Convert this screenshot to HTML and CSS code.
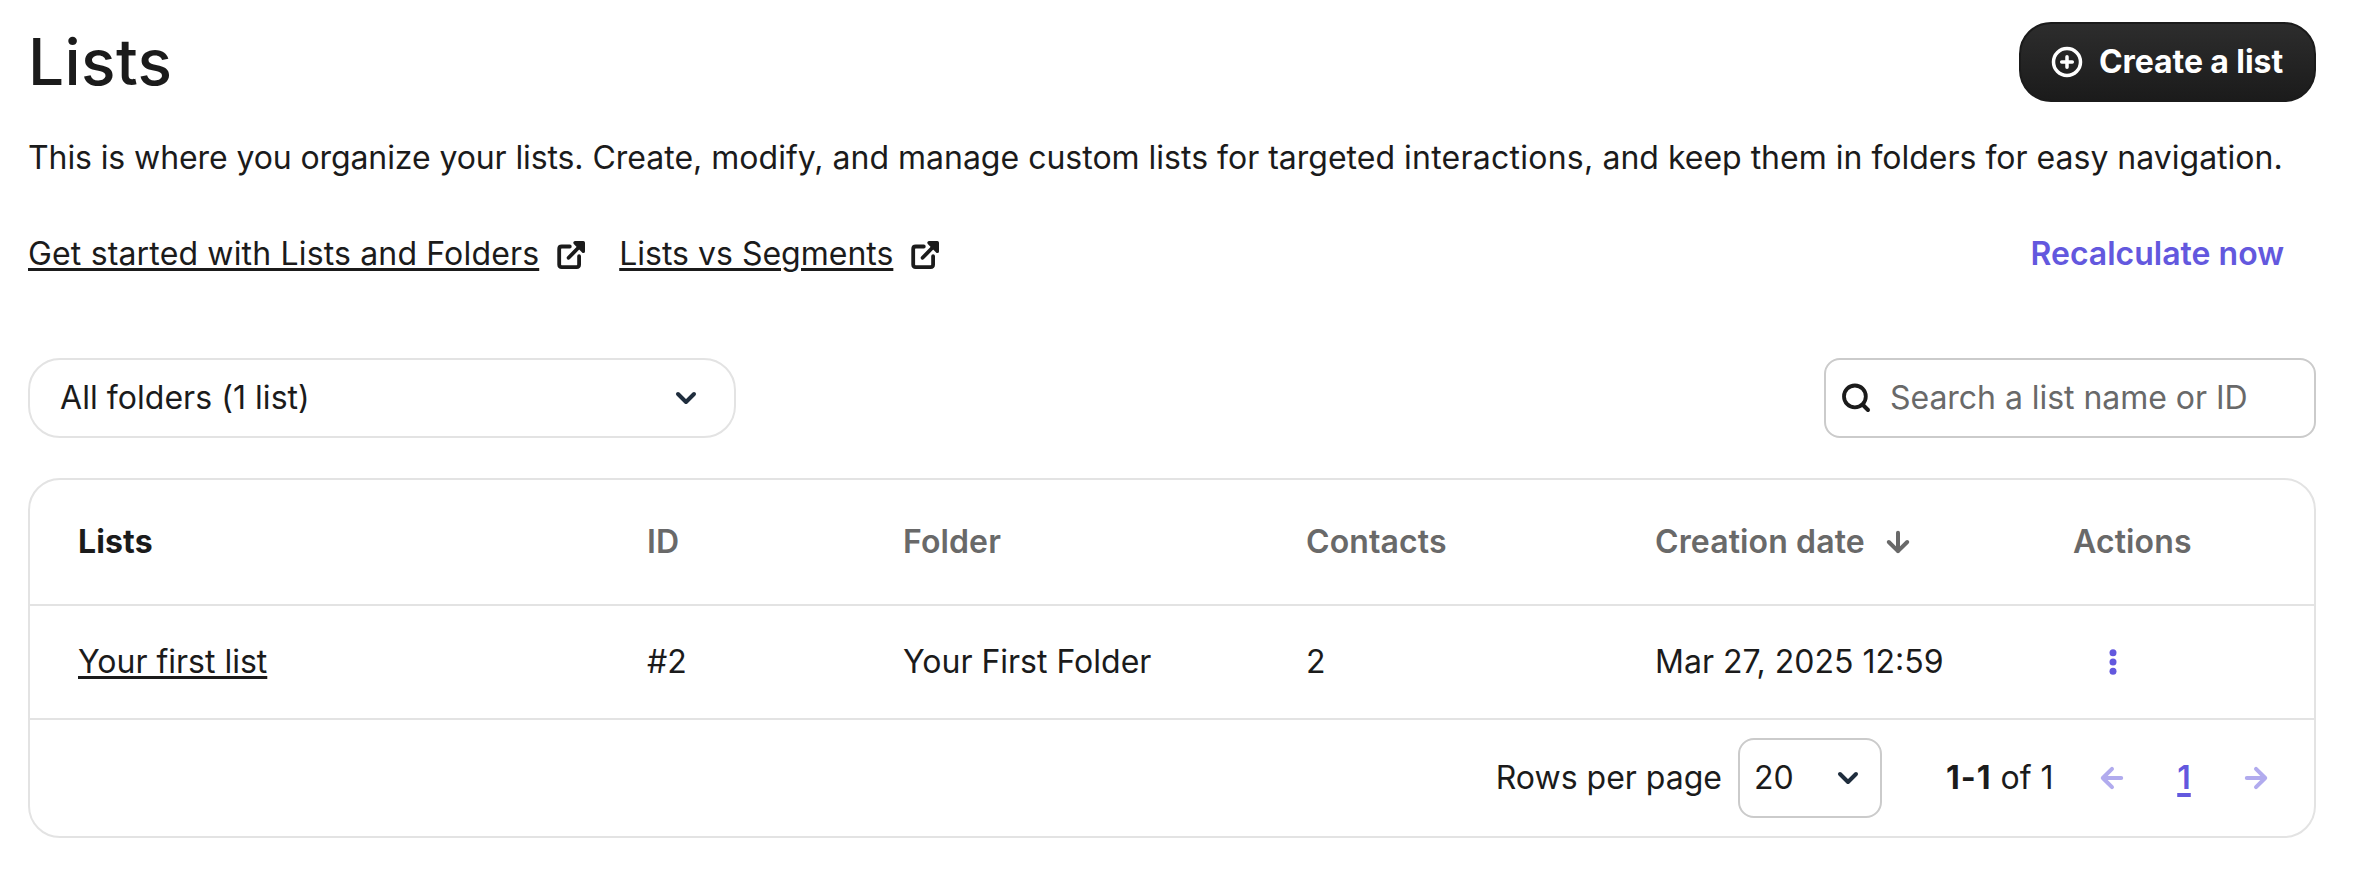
FILE: index.html
```html
<!DOCTYPE html>
<html lang="en">
<head>
<meta charset="utf-8">
<title>Lists</title>
<link rel="stylesheet" href="styles.css">
</head>
<body>
<svg class="sprite" width="0" height="0" aria-hidden="true">
  <symbol id="external" viewBox="0 0 32 32">
    <path d="M14.800 8.500H6.700Q4.200 8.500 4.200 11V26.600Q4.200 29.100 6.700 29.100H21.600Q24.100 29.100 24.100 26.600V18.200M13.600 19.800 27 6" fill="none" stroke="currentColor" stroke-width="3.800" stroke-linecap="round" stroke-linejoin="round"/>
    <path d="M20 4.800H28.300V13.400Z" fill="currentColor" stroke="currentColor" stroke-width="3.400" stroke-linejoin="round"/>
  </symbol>
  <symbol id="chevron" viewBox="0 0 32 32">
    <path d="M8 12 16 20 24 12" fill="none" stroke="currentColor" stroke-width="4" stroke-linecap="round" stroke-linejoin="round"/>
  </symbol>
  <symbol id="arrow" viewBox="0 0 32 32">
    <path d="M25.200 16H6.800M16 6.800 6.800 16 16 25.200" fill="none" stroke="currentColor" stroke-width="4" stroke-linecap="round" stroke-linejoin="round"/>
  </symbol>
</svg>
<main class="page">
  <header class="header">
    <h1 class="title">Lists</h1>
    <button class="create">
      <svg class="icon" viewBox="0 0 32 32"><circle cx="16" cy="16" r="13.500" fill="none" stroke="currentColor" stroke-width="3.500"/><path d="M16 10.700V21.300M10.700 16H21.300" stroke="currentColor" stroke-width="3.500" stroke-linecap="round"/></svg>
      <span>Create a list</span>
    </button>
  </header>
  <p class="intro"><span class="lead">This is where you organize your lists.</span> Create, modify, and manage custom lists for targeted <span class="loose">interactions,</span> and keep them in folders for easy navigation.</p>
  <nav class="links">
    <a class="help"><span class="link wide">Get started with Lists and Folders</span><svg class="icon"><use href="#external"/></svg></a>
    <a class="help"><span class="link">Lists vs Segments</span><svg class="icon"><use href="#external"/></svg></a>
    <a class="recalculate">Recalculate now</a>
  </nav>
  <div class="filters">
    <div class="folder-select"><span>All folders (1 list)</span><svg class="icon chevron"><use href="#chevron"/></svg></div>
    <div class="search">
      <svg class="icon search-icon" viewBox="0 0 32 32"><circle cx="13.900" cy="14.400" r="10.900" fill="none" stroke="currentColor" stroke-width="3.800"/><path d="M22 23 27 28" stroke="currentColor" stroke-width="4" stroke-linecap="round"/></svg>
      <span>Search a list name or ID</span>
    </div>
  </div>
  <section class="table">
    <div class="row head">
      <div class="sorted">Lists</div><div>ID</div><div>Folder</div><div>Contacts</div>
      <div class="date">Creation date<svg class="icon down"><use href="#arrow"/></svg></div>
      <div>Actions</div>
    </div>
    <div class="row body">
      <div><a class="link">Your first list</a></div><div>#2</div><div>Your First Folder</div><div>2</div><div>Mar 27, 2025 12:59</div>
      <div class="actions"><svg class="icon dots" viewBox="0 0 32 32"><circle cx="16" cy="6.700" r="3.500"/><circle cx="16" cy="16" r="3.500"/><circle cx="16" cy="25.300" r="3.500"/></svg></div>
    </div>
    <footer class="footer">
      <span>Rows per page</span>
      <div class="rows-select"><span>20</span><svg class="icon chevron"><use href="#chevron"/></svg></div>
      <span class="range"><b>1-1</b> of 1</span>
      <div class="pager">
        <svg class="icon"><use href="#arrow"/></svg>
        <a class="current">1</a>
        <svg class="icon next"><use href="#arrow"/></svg>
      </div>
    </footer>
  </section>
</main>
</body>
</html>
```
FILE: styles.css
```css
* { box-sizing: border-box; }
body {
  margin: 0;
  background: #fff;
  color: #1b1b1b;
  font: 400 32px/48px Inter, sans-serif;
}
.sprite { display: none; }
.icon { display: block; width: 32px; height: 32px; flex: none; }
.page { width: 2288px; margin-left: 28px; padding-top: 22px; white-space: nowrap; }
.header { display: flex; justify-content: space-between; align-items: center; height: 80px; }
.title { margin: 0; font-size: 64px; line-height: 80px; font-weight: 500; letter-spacing: .4px; }
.create {
  display: flex; align-items: center; gap: 16px;
  width: 297px; height: 80px; padding: 0 0 0 30px;
  border: 2px solid #1b1b1b; border-radius: 32px;
  background: linear-gradient(#2d2d2d, #1b1b1b);
  color: #fff; font: 700 32px/48px Inter, sans-serif; letter-spacing: -.08px;
}
.intro { margin: 32px 0 0; }
.lead { letter-spacing: -.1px; }
.loose { letter-spacing: .25px; }
.links { display: flex; align-items: center; gap: 32px; margin-top: 48px; height: 48px; }
.help { display: flex; align-items: center; gap: 16px; }
.link { text-decoration: underline; text-decoration-thickness: 3px; text-underline-offset: 3px; }
.wide { letter-spacing: .16px; }
.recalculate { margin-left: auto; padding-right: 32px; color: #6358de; font-weight: 600; }
.filters { display: flex; justify-content: space-between; margin-top: 80px; }
.folder-select {
  display: flex; align-items: center; justify-content: space-between;
  width: 708px; height: 80px; padding: 0 32px 0 30px;
  border: 2px solid #e3e3e3; border-radius: 32px; letter-spacing: .05px;
}
.chevron { color: #1f2d3d; }
.search {
  display: flex; align-items: center; gap: 17px;
  width: 492px; height: 80px; padding-left: 15px;
  border: 2px solid #cbcbcb; border-radius: 16px; color: #696969; letter-spacing: -.04px;
}
.search-icon { color: #1b1b1b; }
.table { margin-top: 40px; border: 2px solid #e3e3e3; border-radius: 32px; }
.row {
  display: grid; align-items: center; padding-left: 48px;
  grid-template-columns: 569px 256px 403px 349px 418px 1fr;
  border-bottom: 2px solid #e3e3e3;
}
.head { height: 126px; color: #696969; font-weight: 600; letter-spacing: .12px; }
.body { height: 114px; }
.sorted { color: #1b1b1b; font-weight: 700; }
.date { display: flex; align-items: center; gap: 17px; }
.down { transform: rotate(-90deg); }
.actions { padding-left: 24px; }
.dots { fill: #6358de; }
.footer { display: flex; align-items: center; justify-content: flex-end; height: 116px; padding-right: 42px; }
.rows-select {
  display: flex; align-items: center; justify-content: space-between;
  width: 144px; height: 80px; margin: 0 64px 0 16px; padding: 0 16px 0 14px;
  border: 2px solid #cbcbcb; border-radius: 16px;
}
.range { width: 110px; }
.range b { font-weight: 700; letter-spacing: 1px; }
.pager { display: flex; align-items: center; margin-left: 40px; color: #b1abee; }
.current {
  width: 112px; text-align: center; color: #6358de; font-weight: 600;
  text-decoration: underline; text-decoration-thickness: 4px; text-underline-offset: 4px;
}
.next { transform: rotate(180deg); }
```
